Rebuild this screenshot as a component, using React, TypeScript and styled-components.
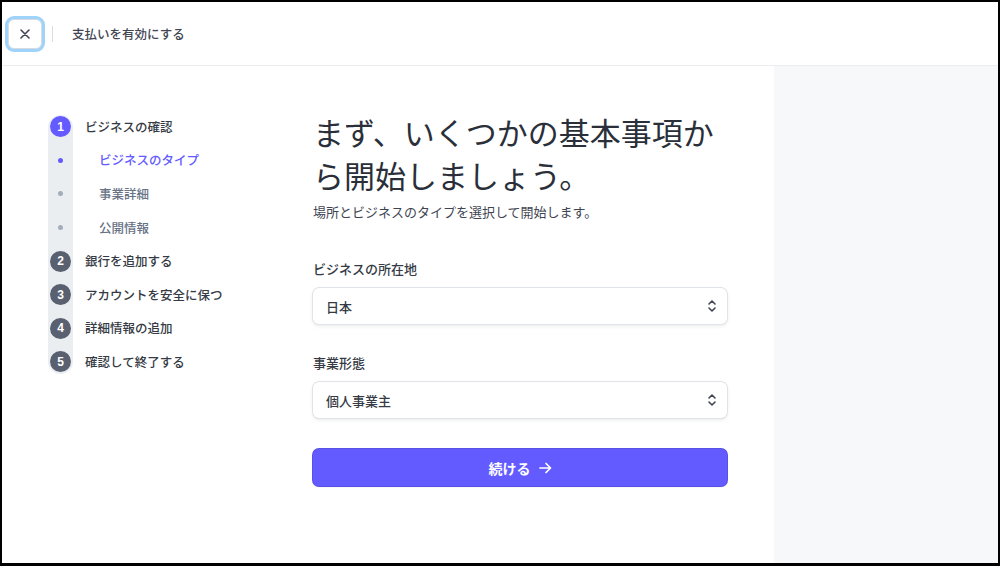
import React from "react";
import styled, { createGlobalStyle } from "styled-components";

const GlobalStyle = createGlobalStyle`
  html, body {
    margin: 0;
    padding: 0;
    background: #000;
  }
  body {
    font-family: "Noto Sans CJK JP", "Noto Sans", sans-serif;
    color: #353a44;
  }
`;

const steps = [
  { n: 1, label: "ビジネスの確認", active: true },
  { n: 2, label: "銀行を追加する", active: false },
  { n: 3, label: "アカウントを安全に保つ", active: false },
  { n: 4, label: "詳細情報の追加", active: false },
  { n: 5, label: "確認して終了する", active: false },
];

const subSteps = [
  { label: "ビジネスのタイプ", active: true },
  { label: "事業詳細", active: false },
  { label: "公開情報", active: false },
];

const Chevrons = () => (
  <svg width="10" height="14" viewBox="0 0 10 14" fill="none">
    <path d="M2 5 L5 2 L8 5" stroke="#414552" strokeWidth="1.6" strokeLinecap="round" strokeLinejoin="round" />
    <path d="M2 9 L5 12 L8 9" stroke="#414552" strokeWidth="1.6" strokeLinecap="round" strokeLinejoin="round" />
  </svg>
);

const CloseIcon = () => (
  <svg width="10" height="10" viewBox="0 0 10 10" fill="none">
    <path d="M1 1 L9 9 M9 1 L1 9" stroke="#414552" strokeWidth="1.6" strokeLinecap="round" />
  </svg>
);

const ArrowIcon = () => (
  <svg width="13" height="12" viewBox="0 0 13 12" fill="none">
    <path d="M1 6 H11.5 M7 1.5 L11.5 6 L7 10.5" stroke="#fff" strokeWidth="1.7" strokeLinecap="round" strokeLinejoin="round" />
  </svg>
);

export default function App() {
  return (
    <Frame>
      <GlobalStyle />
      <Header>
        <CloseButton aria-label="閉じる">
          <CloseIcon />
        </CloseButton>
        <Divider />
        <HeaderTitle>支払いを有効にする</HeaderTitle>
      </Header>
      <Body>
        <Main>
          <StepList>
            {steps.map((step) => (
              <React.Fragment key={step.n}>
                <StepRow>
                  <StepCircle $active={step.active}>{step.n}</StepCircle>
                  <StepLabel>{step.label}</StepLabel>
                </StepRow>
                {step.n === 1 &&
                  subSteps.map((sub) => (
                    <StepRow key={sub.label}>
                      <DotCell>
                        <Dot $active={sub.active} />
                      </DotCell>
                      <SubLabel $active={sub.active}>{sub.label}</SubLabel>
                    </StepRow>
                  ))}
              </React.Fragment>
            ))}
          </StepList>
          <Content>
            <Heading>まず、いくつかの基本事項から開始しましょう。</Heading>
            <Subtitle>場所とビジネスのタイプを選択して開始します。</Subtitle>
            <FieldLabel>ビジネスの所在地</FieldLabel>
            <SelectBox>
              <span>日本</span>
              <Chevrons />
            </SelectBox>
            <FieldLabel $gap={29}>事業形態</FieldLabel>
            <SelectBox>
              <span>個人事業主</span>
              <Chevrons />
            </SelectBox>
            <ContinueButton>
              続ける
              <ArrowIcon />
            </ContinueButton>
          </Content>
        </Main>
        <Aside />
      </Body>
    </Frame>
  );
}

const Frame = styled.div`
  width: 1000px;
  height: 566px;
  box-sizing: border-box;
  border: 2px solid #000;
  border-bottom-width: 3px;
  background: #fff;
  display: flex;
  flex-direction: column;
  overflow: hidden;
`;

const Header = styled.header`
  height: 64px;
  flex-shrink: 0;
  box-sizing: border-box;
  border-bottom: 1px solid #ebeef1;
  display: flex;
  align-items: center;
  padding-left: 6px;
`;

const CloseButton = styled.button`
  width: 34px;
  height: 30px;
  margin-top: 1px;
  border: 1px solid #d5dbe1;
  border-radius: 6px;
  background: #fff;
  box-shadow: 0 0 0 3px #9fd3fa;
  display: flex;
  align-items: center;
  justify-content: center;
  padding: 0;
`;

const Divider = styled.div`
  width: 1px;
  height: 16px;
  background: #d8dee4;
  margin-left: 10px;
`;

const HeaderTitle = styled.div`
  margin-left: 19px;
  font-size: 12.5px;
  line-height: 18px;
  font-weight: 500;
  color: #414552;
`;

const Body = styled.div`
  flex: 1;
  display: flex;
  min-height: 0;
`;

const Main = styled.main`
  flex: 1;
  display: flex;
  padding: 44px 0 0 46px;
`;

const StepList = styled.div`
  position: relative;
  width: 265px;
  align-self: flex-start;

  &::before {
    content: "";
    position: absolute;
    left: 0;
    top: 5px;
    bottom: 5px;
    width: 25px;
    border-radius: 13px;
    background: #ebeef1;
  }
`;

const StepRow = styled.div`
  position: relative;
  height: 33.6px;
  display: flex;
  align-items: center;
`;

const StepCircle = styled.div<{ $active: boolean }>`
  width: 21px;
  height: 21px;
  margin-left: 2px;
  border-radius: 50%;
  background: ${(p) => (p.$active ? "#635bff" : "#596171")};
  color: #fff;
  font-family: "Liberation Sans", sans-serif;
  font-size: 12px;
  font-weight: 700;
  display: flex;
  align-items: center;
  justify-content: center;
`;

const StepLabel = styled.div`
  margin-left: 14px;
  font-size: 12.5px;
  line-height: 18px;
  font-weight: 500;
  color: #353a44;
`;

const DotCell = styled.div`
  width: 25px;
  display: flex;
  justify-content: center;
`;

const Dot = styled.div<{ $active: boolean }>`
  width: 5px;
  height: 5px;
  border-radius: 50%;
  background: ${(p) => (p.$active ? "#635bff" : "#a3acba")};
`;

const SubLabel = styled.div<{ $active: boolean }>`
  margin-left: 26px;
  font-size: 12.5px;
  line-height: 18px;
  font-weight: 500;
  color: ${(p) => (p.$active ? "#635bff" : "#687385")};
`;

const Content = styled.div`
  width: 414px;
  display: flex;
  flex-direction: column;
`;

const Heading = styled.h1`
  margin: 0;
  font-size: 31px;
  line-height: 43px;
  font-weight: 400;
  color: #2a2f3a;
`;

const Subtitle = styled.p`
  margin: 6px 0 0;
  font-size: 13px;
  line-height: 20px;
  color: #414552;
`;

const FieldLabel = styled.div<{ $gap?: number }>`
  margin-top: ${(p) => p.$gap ?? 37}px;
  font-size: 13px;
  line-height: 20px;
  font-weight: 500;
  color: #353a44;
`;

const SelectBox = styled.div`
  margin-top: 9px;
  height: 36px;
  box-sizing: border-box;
  border-radius: 6px;
  background: #fff;
  box-shadow: 0 0 0 1px #e0e4e9, 0 1px 1px rgba(0, 0, 0, 0.1), 0 2px 4px rgba(60, 66, 87, 0.1);
  padding: 0 10px 0 13px;
  display: flex;
  align-items: center;
  justify-content: space-between;
  font-size: 13px;
  font-weight: 500;
  color: #353a44;
`;

const ContinueButton = styled.button`
  margin-top: 31px;
  height: 37px;
  border: none;
  border-radius: 6px;
  background: #635bff;
  box-shadow: 0 0 0 1px #5851e6, 0 1px 2px rgba(0, 0, 0, 0.12);
  color: #fff;
  font-family: "Noto Sans CJK JP", "Noto Sans", sans-serif;
  font-size: 14px;
  font-weight: 700;
  display: flex;
  align-items: center;
  justify-content: center;
  gap: 8px;
  padding: 0;
`;

const Aside = styled.aside`
  width: 224px;
  flex-shrink: 0;
  background: #f6f8fa;
`;
